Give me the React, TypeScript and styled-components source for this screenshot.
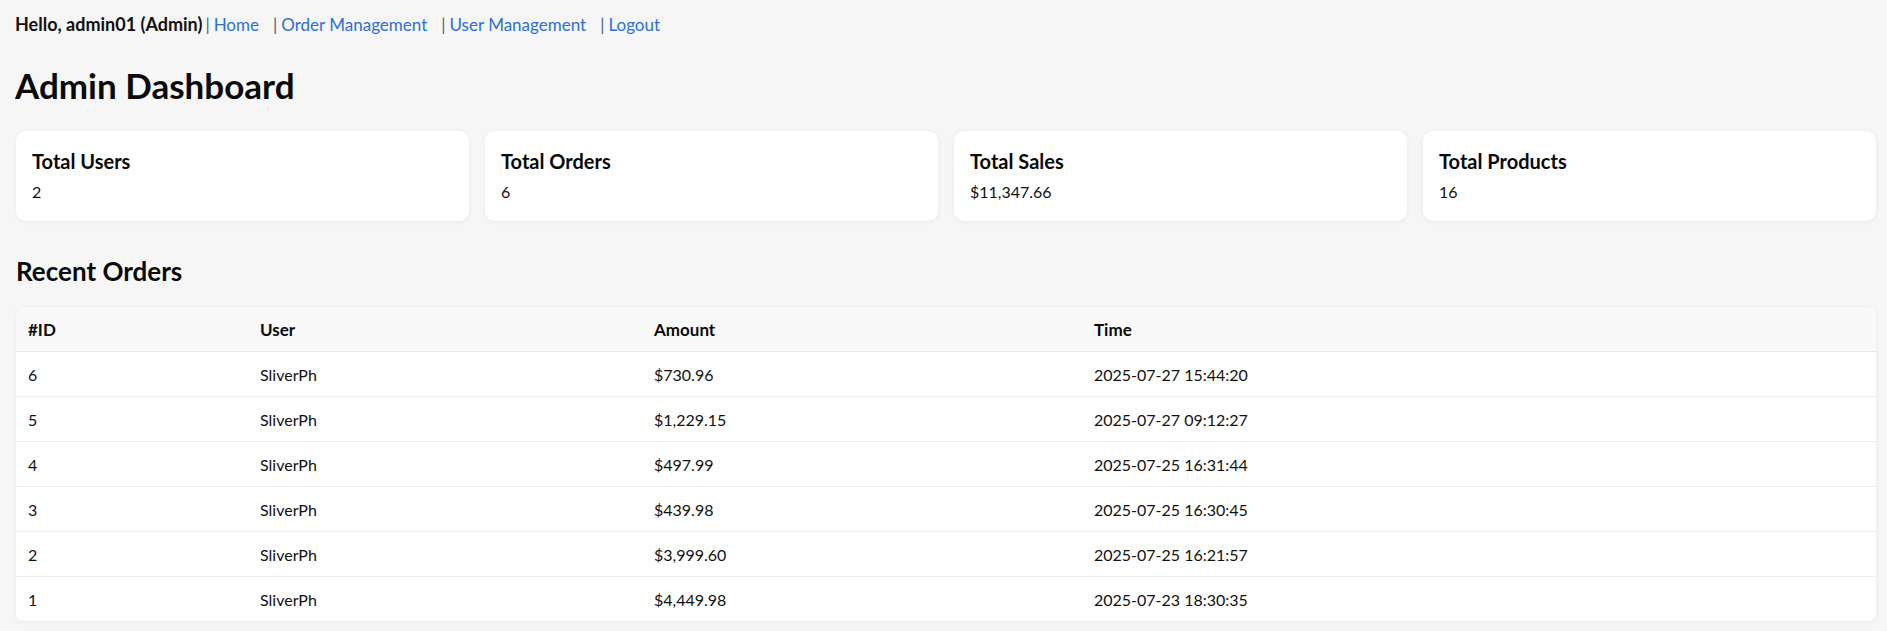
import React from "react";
import styled, { createGlobalStyle } from "styled-components";

const GlobalStyle = createGlobalStyle`
  html, body {
    margin: 0;
    padding: 0;
    background: #f6f6f6;
  }
  body {
    font-family: Lato, "Liberation Sans", Arial, sans-serif;
    color: #111;
  }
`;

const Page = styled.div`
  padding: 10px 11px 10px 16px;
  background: #f6f6f6;
`;

const Nav = styled.nav`
  display: flex;
  align-items: baseline;
  font-size: 18px;
  line-height: 28px;
  white-space: nowrap;
`;

const Greeting = styled.span`
  font-weight: 700;
  color: #111;
  margin-left: -1px;
`;

const Sep = styled.span<{ $first?: boolean }>`
  color: #50607a;
  font-weight: 400;
  font-size: 17px;
  margin: 0 4px 0 ${(p) => (p.$first ? 3 : 0)}px;
`;

const NavLink = styled.a<{ $last?: boolean }>`
  color: #2d6fd8;
  font-size: 17px;
  text-decoration: none;
  margin-right: ${(p) => (p.$last ? 0 : 14)}px;
`;

const Title = styled.h1`
  margin: 24px 0 24px -1px;
  font-size: 35px;
  line-height: 44px;
  font-weight: 700;
  color: #0a0a0a;
`;

const StatsGrid = styled.div`
  display: grid;
  grid-template-columns: repeat(4, 1fr);
  gap: 16px;
`;

const StatCard = styled.div`
  background: #fff;
  border-radius: 10px;
  box-shadow: 0 1px 5px rgba(0, 0, 0, 0.06);
  padding: 18px 16px 18px 16px;
`;

const StatLabel = styled.div`
  font-size: 20px;
  line-height: 24px;
  font-weight: 700;
  color: #0a0a0a;
`;

const StatValue = styled.div`
  margin-top: 8px;
  font-size: 16px;
  line-height: 22px;
  color: #111;
`;

const SectionTitle = styled.h2`
  margin: 34px 0 20px 0;
  font-size: 26px;
  line-height: 32px;
  font-weight: 700;
  color: #0a0a0a;
`;

const TableWrap = styled.div`
  background: #fff;
  border-radius: 7px;
  box-shadow: 0 1px 5px rgba(0, 0, 0, 0.06);
  overflow: hidden;
`;

const Table = styled.table`
  width: 100%;
  border-collapse: collapse;
  table-layout: fixed;
  font-size: 16px;
`;

const HeadCell = styled.th`
  text-align: left;
  font-weight: 700;
  font-size: 17px;
  color: #0a0a0a;
  background: #f9f9f9;
  height: 44px;
  padding: 0 12px;
  border-bottom: 1px solid #e8e8e8;
`;

const Row = styled.tr<{ $last?: boolean }>`
  td {
    border-bottom: ${(p) => (p.$last ? "none" : "1px solid #ebebeb")};
  }
`;

const Cell = styled.td`
  height: 44px;
  padding: 0 12px;
  color: #111;
`;

const orders = [
  { id: 6, user: "SliverPh", amount: "$730.96", time: "2025-07-27 15:44:20" },
  { id: 5, user: "SliverPh", amount: "$1,229.15", time: "2025-07-27 09:12:27" },
  { id: 4, user: "SliverPh", amount: "$497.99", time: "2025-07-25 16:31:44" },
  { id: 3, user: "SliverPh", amount: "$439.98", time: "2025-07-25 16:30:45" },
  { id: 2, user: "SliverPh", amount: "$3,999.60", time: "2025-07-25 16:21:57" },
  { id: 1, user: "SliverPh", amount: "$4,449.98", time: "2025-07-23 18:30:35" },
];

const stats = [
  { label: "Total Users", value: "2" },
  { label: "Total Orders", value: "6" },
  { label: "Total Sales", value: "$11,347.66" },
  { label: "Total Products", value: "16" },
];

const links = ["Home", "Order Management", "User Management", "Logout"];

export default function App() {
  return (
    <>
      <GlobalStyle />
      <Page>
        <Nav>
          <Greeting>Hello, admin01 (Admin)</Greeting>
          {links.map((l, i) => (
            <React.Fragment key={l}>
              <Sep $first={i === 0}>|</Sep>
              <NavLink href="#" $last={i === links.length - 1}>
                {l}
              </NavLink>
            </React.Fragment>
          ))}
        </Nav>
        <Title>Admin Dashboard</Title>
        <StatsGrid>
          {stats.map((s) => (
            <StatCard key={s.label}>
              <StatLabel>{s.label}</StatLabel>
              <StatValue>{s.value}</StatValue>
            </StatCard>
          ))}
        </StatsGrid>
        <SectionTitle>Recent Orders</SectionTitle>
        <TableWrap>
          <Table>
            <colgroup>
              <col style={{ width: 232 }} />
              <col style={{ width: 394 }} />
              <col style={{ width: 440 }} />
              <col />
            </colgroup>
            <thead>
              <tr>
                <HeadCell>#ID</HeadCell>
                <HeadCell>User</HeadCell>
                <HeadCell>Amount</HeadCell>
                <HeadCell>Time</HeadCell>
              </tr>
            </thead>
            <tbody>
              {orders.map((o, i) => (
                <Row key={o.id} $last={i === orders.length - 1}>
                  <Cell>{o.id}</Cell>
                  <Cell>{o.user}</Cell>
                  <Cell>{o.amount}</Cell>
                  <Cell>{o.time}</Cell>
                </Row>
              ))}
            </tbody>
          </Table>
        </TableWrap>
      </Page>
    </>
  );
}
